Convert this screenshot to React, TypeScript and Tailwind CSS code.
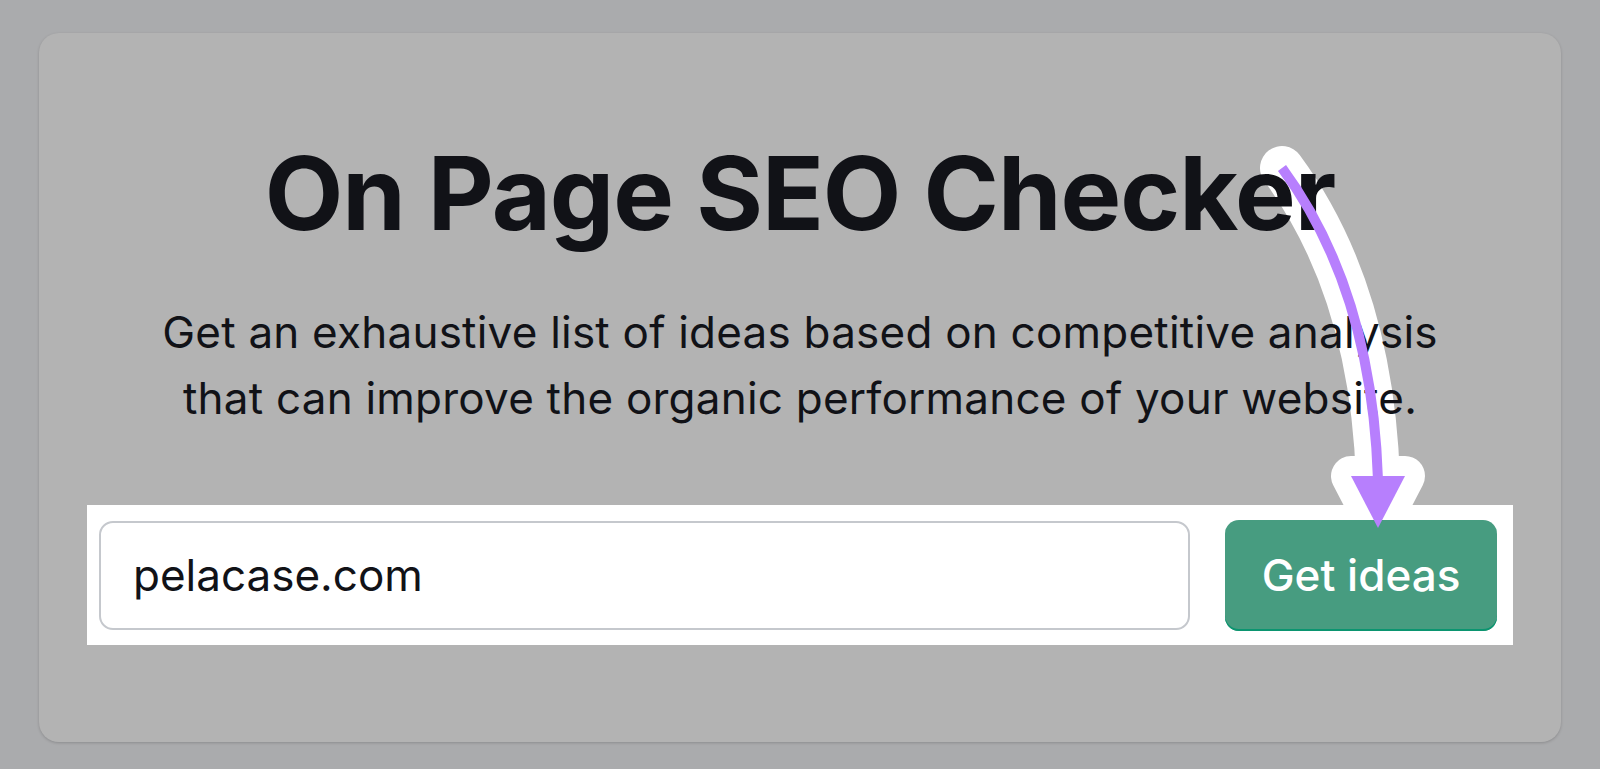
export default function App() {
  const curve = "M1282 168 Q1372 290 1378 480";
  const head = "M1351 476 L1405 476 L1378 528 Z";

  return (
    <div className="relative h-[769px] w-[1600px] overflow-hidden bg-[#aaabad] pt-[33px] font-['Inter',sans-serif]">
      <div className="mx-[39px] h-[709px] rounded-[20px] bg-[#b3b3b3] shadow-[0_1px_3px_rgba(0,0,0,0.18)] pt-[109px]">
        <div className="relative z-10 flex flex-col items-center">
          <h1 className="text-[102px] leading-[102px] font-bold tracking-[-0.01em] text-[#111217]">
            On Page SEO Checker
          </h1>
          <p className="mt-[55px] text-center text-[44px] leading-[66px] tracking-[0.005em] text-[#111217]">
            Get an exhaustive list of ideas based on competitive analysis
            <br />
            that can improve the organic performance of your website.
          </p>
          <div className="mt-[74px] flex h-[140px] w-[1426px] items-center bg-white pl-[12px] pr-[16px]">
            <div className="flex h-[109px] flex-1 items-center rounded-[14px] border-2 border-[#c5c8cd] pl-[32px] text-[44px] text-[#111217]">
              pelacase.com
            </div>
            <button className="ml-[35px] flex h-[111px] w-[272px] items-center justify-center rounded-[14px] bg-[#479c80] text-[44px] font-medium text-white shadow-[inset_0_-2px_0_#0b9570]">
              Get ideas
            </button>
          </div>
        </div>
      </div>

      {/* annotation: white outline sits under the text, purple stroke above */}
      <svg className="pointer-events-none absolute inset-0 z-[5]" width="1600" height="769">
        <path d={curve} fill="none" stroke="#fff" strokeWidth="44" strokeLinecap="round" />
        <path d={head} fill="#fff" stroke="#fff" strokeWidth="40" strokeLinejoin="round" />
      </svg>
      <svg className="pointer-events-none absolute inset-0 z-20" width="1600" height="769">
        <path d={curve} fill="none" stroke="#b77ffd" strokeWidth="10" />
        <path d={head} fill="#b77ffd" />
      </svg>
    </div>
  );
}
